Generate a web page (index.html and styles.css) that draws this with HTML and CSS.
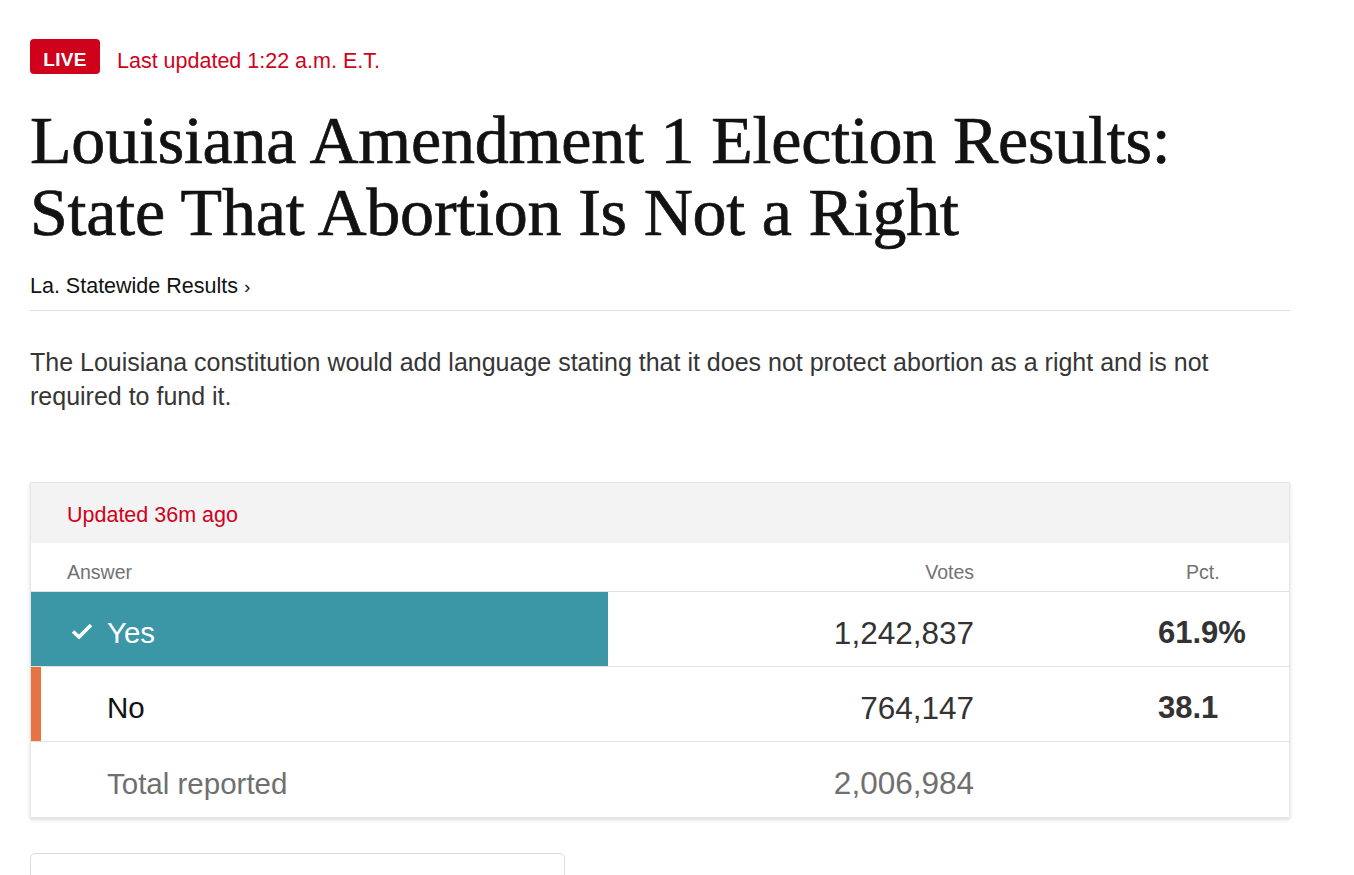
FILE: index.html
```html
<!DOCTYPE html>
<html lang="en">
<head>
<meta charset="utf-8">
<title>Louisiana Amendment 1 Election Results</title>
<link rel="stylesheet" href="styles.css">
</head>
<body>
<main class="page">
  <div class="status">
    <span class="live">LIVE</span>
    <span class="updated">Last updated 1:22 a.m. E.T.</span>
  </div>
  <h1 class="headline">Louisiana Amendment 1 Election Results:<br>State That Abortion Is Not a Right</h1>
  <div class="crumb"><a href="#">La. Statewide Results <span class="chev">›</span></a></div>
  <p class="summary">The Louisiana constitution would add language stating that it does not protect abortion as a right and is not required to fund it.</p>

  <section class="results">
    <div class="results-top">Updated 36m ago</div>
    <div class="row head">
      <div class="c-answer">Answer</div>
      <div class="c-votes">Votes</div>
      <div class="c-pct">Pct.</div>
    </div>
    <div class="row cand winner">
      <div class="track"><div class="bar" style="width:61.9%"></div></div>
      <div class="c-answer">
        <svg class="check" viewBox="0 0 22 16" width="22" height="16" aria-hidden="true"><path d="M2 8.5 L8 14 L20 2" fill="none" stroke="#fff" stroke-width="3.6"/></svg>
        <span>Yes</span>
      </div>
      <div class="c-votes">1,242,837</div>
      <div class="c-pct">61.9%</div>
    </div>
    <div class="row cand loser">
      <div class="c-answer"><span>No</span></div>
      <div class="c-votes">764,147</div>
      <div class="c-pct">38.1</div>
    </div>
    <div class="row cand total">
      <div class="c-answer"><span>Total reported</span></div>
      <div class="c-votes">2,006,984</div>
      <div class="c-pct"></div>
    </div>
  </section>

  <div class="next-card"></div>
</main>
</body>
</html>
```

FILE: styles.css
```css
* { box-sizing: border-box; }
html, body { margin: 0; padding: 0; background: #fff; }
body { font-family: "Liberation Sans", Arial, sans-serif; color: #121212; overflow: hidden; }

.page { width: 1260px; margin-left: 30px; padding-top: 39px; }

.status { display: flex; align-items: center; gap: 17px; height: 35px; }
.live {
  display: flex; align-items: center; justify-content: center;
  width: 70px; height: 35px; border-radius: 4px; padding-top: 6px;
  background: #d0021b; color: #fff; font-weight: 700; font-size: 19px; letter-spacing: 0.3px;
}
.updated { color: #d0021b; font-size: 21.5px; padding-top: 9px; }

.headline {
  margin: 30px 0 0; font-family: "Liberation Serif", "Times New Roman", serif;
  font-weight: 400; font-size: 68px; line-height: 72px; color: #121212; letter-spacing: -0.2px;
  -webkit-text-stroke: 0.7px #121212;
}

.crumb { margin-top: 26px; padding-bottom: 11px; border-bottom: 1px solid #dfdfdf; font-size: 21.5px; line-height: 24px; }
.crumb a { color: #121212; text-decoration: none; }
.chev { font-size: 19px; }

.summary { margin: 34px 0 0; font-size: 25px; line-height: 34px; color: #363636; }

.results {
  margin-top: 69px; border: 1px solid #e6e6e6; box-shadow: 0 2px 4px rgba(0,0,0,0.14);
}
.results-top { height: 60px; padding-top: 4px; background: #f3f3f3; color: #d0021b; font-size: 21.5px; display: flex; align-items: center; padding-left: 36px; }

.row { display: grid; grid-template-columns: 1fr 200px 315px; position: relative; border-bottom: 1px solid #e2e2e2; }
.row:last-child { border-bottom: 0; }
.row.head { height: 49px; padding-top: 10px; align-items: center; color: #727272; font-size: 19.5px; }
.row.head .c-answer { padding-left: 36px; }
.row.head .c-pct { padding-left: 212px; }

.c-votes { text-align: right; }
.row.cand { height: 75px; align-items: center; }
.row.total { height: 75px; }
.row.cand .c-answer { position: relative; display: flex; align-items: center; padding-left: 76px; padding-top: 8px; font-size: 29.5px; color: #121212; }
.row.cand .c-votes { position: relative; padding-top: 8px; font-size: 31.5px; color: #333; }
.row.cand .c-pct { padding-left: 184px; padding-top: 8px; font-size: 31px; font-weight: 700; color: #333; }

.track { position: absolute; left: 0; top: 0; bottom: 0; width: 932px; }
.bar { height: 100%; background: #3b97a6; }
.row.winner .c-answer { color: #fff; }
.winner .check { position: absolute; left: 40px; top: 50%; margin-top: -6px; }
.loser::before { content: ""; position: absolute; left: 0; top: 0; bottom: 0; width: 10px; background: #e57343; }
.row.total .c-answer, .row.total .c-votes { color: #6f6f6f; }

.next-card { margin-top: 35px; width: 535px; height: 60px; border: 1px solid #dcdcdc; border-radius: 5px; }
```
